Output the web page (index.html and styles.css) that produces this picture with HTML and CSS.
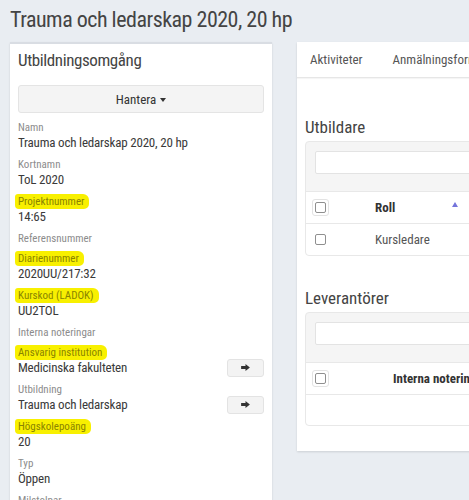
FILE: index.html
```html
<!DOCTYPE html>
<html lang="sv">
<head>
  <meta charset="UTF-8">
  <meta name="viewport" content="width=device-width, initial-scale=1.0">
  <title>Trauma och ledarskap 2020, 20 hp</title>
  <link rel="stylesheet" href="styles.css">
</head>
<body>

  <h1 class="page-title">Trauma och ledarskap 2020, 20 hp</h1>

  <div class="layout">

    <div class="panel info">
      <h2 class="panel-title">Utbildningsomgång</h2>
      <button class="manage">Hantera <span class="caret"></span></button>

      <div class="field">
        <div class="label">Namn</div>
        <div class="value">Trauma och ledarskap 2020, 20 hp</div>
      </div>
      <div class="field">
        <div class="label">Kortnamn</div>
        <div class="value">ToL 2020</div>
      </div>
      <div class="field">
        <div class="label"><span class="mark">Projektnummer</span></div>
        <div class="value">14:65</div>
      </div>
      <div class="field">
        <div class="label">Referensnummer</div>
      </div>
      <div class="field">
        <div class="label"><span class="mark">Diarienummer</span></div>
        <div class="value">2020UU/217:32</div>
      </div>
      <div class="field">
        <div class="label"><span class="mark">Kurskod (LADOK)</span></div>
        <div class="value">UU2TOL</div>
      </div>
      <div class="field">
        <div class="label">Interna noteringar</div>
      </div>
      <div class="field">
        <div class="label"><span class="mark">Ansvarig institution</span></div>
        <div class="value with-link">
          Medicinska fakulteten
          <button class="go"><svg viewBox="0 0 10 8" width="9" height="7"><path d="M0 2.4H5V0L10 4L5 8V5.6H0Z" fill="#333"/></svg></button>
        </div>
      </div>
      <div class="field">
        <div class="label">Utbildning</div>
        <div class="value with-link">
          Trauma och ledarskap
          <button class="go"><svg viewBox="0 0 10 8" width="9" height="7"><path d="M0 2.4H5V0L10 4L5 8V5.6H0Z" fill="#333"/></svg></button>
        </div>
      </div>
      <div class="field">
        <div class="label"><span class="mark">Högskolepoäng</span></div>
        <div class="value">20</div>
      </div>
      <div class="field">
        <div class="label">Typ</div>
        <div class="value">Öppen</div>
      </div>
      <div class="field">
        <div class="label">Milstolpar</div>
      </div>
    </div>

    <div class="panel main">
      <div class="tabs">
        <a href="#">Aktiviteter</a>
        <a href="#">Anmälningsform</a>
      </div>

      <div class="section first">
        <h3>Utbildare</h3>
        <div class="table-box">
          <div class="search"><input type="text"></div>
          <div class="row head">
            <span class="check-cell"><span class="check"></span></span>
            <span class="col-role">Roll</span>
            <span class="sort"></span>
          </div>
          <div class="row">
            <span class="check-cell plain"><span class="check"></span></span>
            <span class="col-role normal">Kursledare</span>
          </div>
        </div>
      </div>

      <div class="section">
        <h3>Leverantörer</h3>
        <div class="table-box">
          <div class="search"><input type="text"></div>
          <div class="row head">
            <span class="check-cell"><span class="check"></span></span>
            <span class="col-notes">Interna notering</span>
          </div>
          <div class="row empty"></div>
        </div>
      </div>
    </div>

  </div>

</body>
</html>
```

FILE: styles.css
```css
html, body {
  overflow: hidden;
}
body {
  font-family: "Liberation Sans Narrow", "Roboto Condensed", "Liberation Sans", sans-serif;
  background-color: #e9edf2;
  color: #333;
  margin: 0;
  padding: 0 10px;
}
.page-title {
  font-size: 22px;
  font-weight: normal;
  letter-spacing: -0.5px;
  color: #444;
  margin: 0;
  padding-top: 5px;
  line-height: 30px;
  height: 37px;
}
.layout {
  display: grid;
  grid-template-columns: 262px 420px;
  column-gap: 25px;
  align-items: start;
}
.panel {
  background: #fff;
  box-shadow: 0 1px 2px rgba(0, 0, 0, 0.12);
}
.info {
  border-top: 2px solid #d9dde3;
  padding: 3px 8px 0;
}
.panel-title {
  font-size: 17px;
  font-weight: normal;
  letter-spacing: -0.4px;
  color: #444;
  margin: 0;
  line-height: 26px;
}
.manage {
  display: block;
  width: 100%;
  height: 28px;
  margin: 12px 0 8px;
  background: #f4f4f4;
  border: 1px solid #e4e4e4;
  border-radius: 3px;
  font-family: inherit;
  font-size: 13px;
  color: #333;
}
.caret {
  display: inline-block;
  vertical-align: middle;
  border-top: 4px solid #333;
  border-left: 3.5px solid transparent;
  border-right: 3.5px solid transparent;
  margin-left: 1px;
}
.field {
  margin-bottom: 7px;
}
.label {
  font-size: 11px;
  line-height: 13px;
  color: #8c8c8c;
}
.mark {
  display: inline-block;
  background: #f8f000;
  color: #8a8400;
  padding: 1px 5px 1px 3px;
  margin: -1px 0 -1px -3px;
  border-radius: 3px 6px 5px 4px;
  line-height: 13px;
}
.value {
  font-size: 13px;
  letter-spacing: -0.2px;
  line-height: 17px;
  color: #3a3a3a;
}
.with-link {
  display: flex;
  justify-content: space-between;
  align-items: center;
}
.go {
  width: 37px;
  height: 18px;
  margin: -1px 0;
  padding: 0;
  background: #f3f3f3;
  border: 1px solid #e3e3e3;
  border-radius: 3px;
  display: flex;
  align-items: center;
  justify-content: center;
}
.main {
  padding-bottom: 25px;
}
.tabs {
  display: flex;
  height: 35px;
  align-items: center;
  border-bottom: 1px solid #e6e6e6;
  box-shadow: 0 1px 1px rgba(0, 0, 0, 0.04);
  padding-left: 13px;
  overflow: hidden;
}
.tabs a {
  font-size: 13px;
  color: #555;
  text-decoration: none;
  margin-right: 30px;
  white-space: nowrap;
}
.section {
  padding: 0 8px;
}
.section h3 {
  font-size: 17px;
  font-weight: normal;
  color: #444;
  margin: 0 0 3px;
  line-height: 22px;
}
.first {
  padding-top: 38px;
}
.section + .section {
  padding-top: 31px;
}
.table-box {
  background: #f5f5f5;
  border: 1px solid #e8e8e8;
  border-radius: 4px;
}
.search {
  padding: 9px 9px 17px;
}
.search input {
  display: block;
  width: 100%;
  height: 23px;
  box-sizing: border-box;
  border: 1px solid #e3e3e3;
  border-radius: 2px;
  background: #fff;
}
.row {
  display: flex;
  align-items: center;
  height: 31px;
  background: #fff;
  border-top: 1px solid #e8e8e8;
  font-size: 13px;
  color: #555;
}
.row:last-child {
  border-radius: 0 0 4px 4px;
}
.check-cell {
  width: 17px;
  height: 17px;
  margin-left: 6px;
  box-sizing: border-box;
  border: 1px solid #e3e3e3;
  border-radius: 3px;
  display: flex;
  align-items: center;
  justify-content: center;
}
.check-cell.plain {
  border-color: transparent;
}
.check {
  width: 11px;
  height: 11px;
  box-sizing: border-box;
  border: 1px solid #8f8f8f;
  border-radius: 2px;
}
.col-role {
  margin-left: 46px;
  width: 70px;
  font-weight: bold;
  color: #333;
}
.col-role.normal {
  font-weight: normal;
  color: #555;
}
.sort {
  margin-left: 7px;
  border-bottom: 5px solid #7474db;
  border-left: 3.5px solid transparent;
  border-right: 3.5px solid transparent;
  margin-top: -6px;
}
.col-notes {
  margin-left: 64px;
  font-weight: bold;
  color: #333;
  white-space: nowrap;
}
.row.empty {
  height: 30px;
}
```
